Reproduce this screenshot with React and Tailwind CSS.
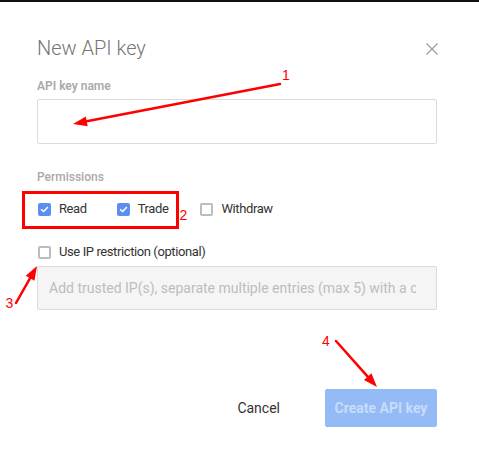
import React from 'react';

const Arrow = ({ x1, y1, x2, y2 }) => {
    // line stops short of the tip, head is a filled triangle
    const a = Math.atan2(y2 - y1, x2 - x1);
    const len = 14;
    const w = 5;
    const bx = x2 - len * Math.cos(a);
    const by = y2 - len * Math.sin(a);
    const px = -Math.sin(a) * w;
    const py = Math.cos(a) * w;
    return (
        <g>
            <line x1={x1} y1={y1} x2={bx} y2={by} stroke="#f00" strokeWidth="2.5" strokeLinecap="round" />
            <polygon points={`${x2},${y2} ${bx + px},${by + py} ${bx - px},${by - py}`} fill="#f00" />
        </g>
    );
};

const Check = ({ checked }) =>
    checked ? (
        <span className="w-[13px] h-[13px] rounded-[2px] bg-[#5a8ff0] flex items-center justify-center shrink-0">
            <svg width="9" height="9" viewBox="0 0 10 10">
                <path d="M1.8 5.2 L4 7.3 L8.3 2.8" fill="none" stroke="#fff" strokeWidth="1.7" strokeLinecap="round" strokeLinejoin="round" />
            </svg>
        </span>
    ) : (
        <span className="w-[13px] h-[13px] rounded-[2px] border-2 border-[#bdbdbd] bg-white shrink-0" />
    );

const Option = ({ checked, label, className }) => (
    <label className={`flex items-center gap-[8px] h-5 ${className || ''}`}>
        <Check checked={checked} />
        <span className="text-[13px] leading-5 tracking-[-0.4px] text-[#333]">{label}</span>
    </label>
);

const App = () => {
    return (
        <div
            className="relative min-h-screen bg-white border-t-2 border-[#111] overflow-hidden"
            style={{ fontFamily: 'Roboto, "Liberation Sans", sans-serif' }}
        >
            <div className="pl-[37px] pt-[32px] w-[437px]">
                <div className="flex items-center justify-between h-7">
                    <h1 className="text-[20px] leading-7 font-light text-[#757575]">New API key</h1>
                    <svg width="12" height="12" viewBox="0 0 12 12" className="mr-[-0.5px] mt-[1px]">
                        <path d="M0.5 0.5 L11.5 11.5 M11.5 0.5 L0.5 11.5" stroke="#9e9e9e" strokeWidth="1.3" />
                    </svg>
                </div>

                <div className="mt-4 text-[12px] leading-4 font-semibold text-[#a9a9a9]">API key name</div>
                <input className="mt-[5px] block w-[400px] h-[45px] border border-[#dcdcdc] rounded-[2px] px-[11px] outline-none" />

                <div className="mt-[25px] text-[12px] leading-4 font-medium text-[#a9a9a9]">Permissions</div>
                <div className="mt-[14px] flex items-center pl-px">
                    <Option checked label="Read" className="mr-[30px]" />
                    <Option checked label="Trade" className="mr-[32px]" />
                    <Option label="Withdraw" />
                </div>

                <div className="mt-[23px] pl-px">
                    <Option label="Use IP restriction (optional)" />
                </div>
                <input
                    disabled
                    placeholder="Add trusted IP(s), separate multiple entries (max 5) with a comma"
                    className="mt-[4px] block w-[400px] h-[44px] bg-[#f5f5f5] border border-[#dcdcdc] rounded-[2px] pl-[11px] pr-[20px] text-[14px] placeholder:text-[#bdbdbd] outline-none"
                />

                <div className="mt-[79px] flex items-center justify-end">
                    <button className="text-[14px] text-[#333] mr-[45px]">Cancel</button>
                    <button className="w-[112px] h-[38px] rounded-[2px] bg-[#94bbf5] text-[14px] font-bold text-[#c9dbfa]">
                        Create API key
                    </button>
                </div>
            </div>

            <svg className="absolute inset-0 pointer-events-none" width="479" height="467">
                <rect x="23.5" y="190.5" width="154" height="35" fill="none" stroke="#f00" strokeWidth="3" />
                <Arrow x1={280} y1={82} x2={73} y2={122} />
                <Arrow x1={16} y1={301} x2={37} y2={264} />
                <Arrow x1={336} y1={339} x2={377} y2={385} />
                <g fill="#f00" fontSize="14" style={{ fontFamily: '"Liberation Sans", sans-serif' }}>
                    <text x="282" y="78">1</text>
                    <text x="179.5" y="218">2</text>
                    <text x="5.5" y="306">3</text>
                    <text x="322" y="344">4</text>
                </g>
            </svg>
        </div>
    );
};

export default App;
